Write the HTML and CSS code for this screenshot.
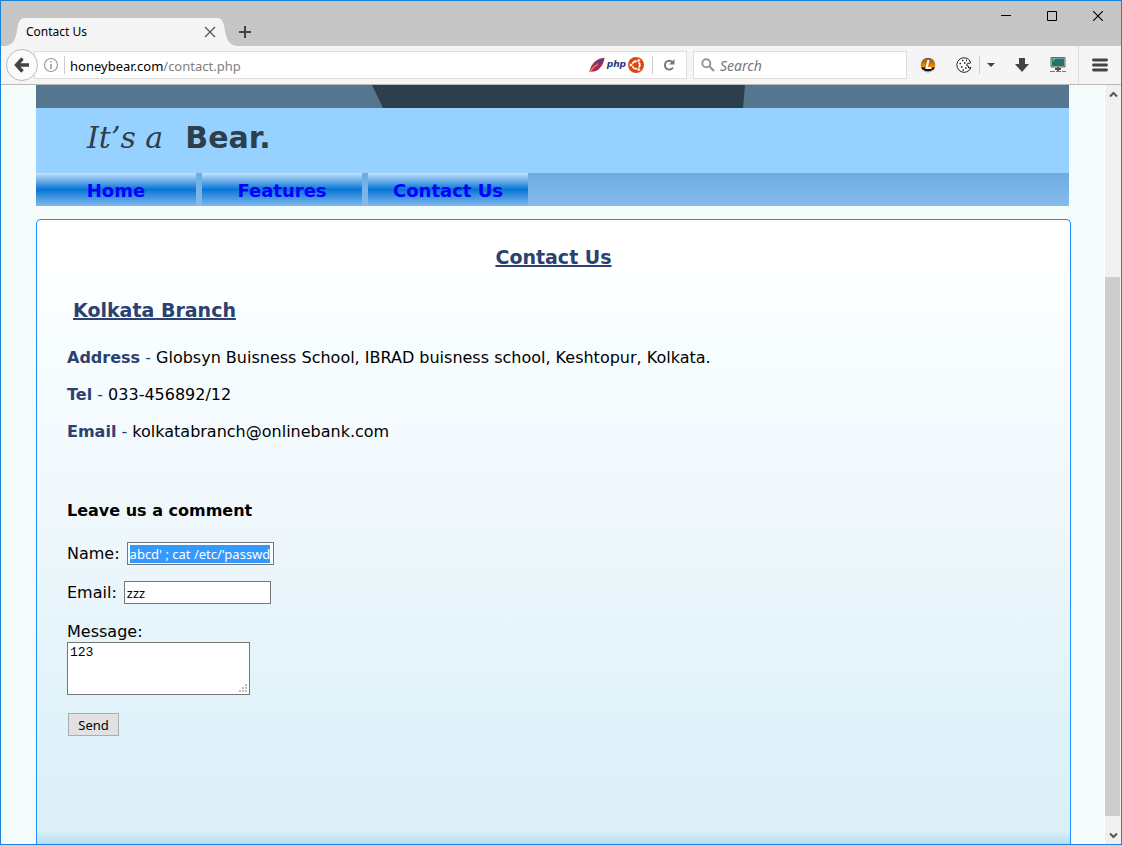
FILE: index.html
```html
<!DOCTYPE html>
<html lang="en">
<head>
<meta charset="utf-8">
<title>Contact Us</title>
<link rel="stylesheet" href="styles.css">
</head>
<body>
<div class="window">
  <header class="titlebar">
    <div class="tab">
      <svg class="tab-edge" viewBox="0 0 20 29" preserveAspectRatio="none"><path d="M0 29C8 28 10 23 12 14C13 4 15 0 20 0V29Z" fill="#f5f5f5"/></svg>
      <div class="tab-body">
        <span>Contact Us</span>
        <button class="plain" aria-label="Close tab"><svg width="12" height="12" viewBox="0 0 12 12"><path d="M1 1L11 11M11 1L1 11" stroke="#555" stroke-width="1.3"/></svg></button>
      </div>
      <svg class="tab-edge" viewBox="0 0 20 29" preserveAspectRatio="none"><path d="M20 29C12 28 10 23 8 14C7 4 5 0 0 0V29Z" fill="#f5f5f5"/></svg>
    </div>
    <button class="plain new-tab" aria-label="New tab"><svg width="12" height="12" viewBox="0 0 12 12"><path d="M6 0V12M0 6H12" stroke="#444" stroke-width="2"/></svg></button>
    <div class="window-buttons">
      <button class="plain" aria-label="Minimize"><svg width="10" height="10" viewBox="0 0 10 10"><path d="M0 4.500H10" stroke="#000"/></svg></button>
      <button class="plain" aria-label="Maximize"><svg width="10" height="10" viewBox="0 0 10 10"><path d="M.5.500H9.500V9.500H.5Z" fill="none" stroke="#000"/></svg></button>
      <button class="plain" aria-label="Close"><svg width="10" height="10" viewBox="0 0 10 10"><path d="M0 0L10 10M10 0L0 10" stroke="#000" stroke-width="1.200"/></svg></button>
    </div>
  </header>

  <div class="toolbar">
    <button class="plain back" aria-label="Back"><svg width="16" height="16" viewBox="0 0 16 16"><path d="M8.500 1.500L2.500 8L8.500 14.500M3 8H15" fill="none" stroke="#444" stroke-width="3.400"/></svg></button>
    <div class="address">
      <svg width="16" height="16" viewBox="0 0 16 16"><circle cx="8" cy="8" r="6.500" fill="none" stroke="#999" stroke-width="1.200"/><path d="M8 4V5.600M8 7V12" stroke="#999" stroke-width="1.600"/></svg>
      <span class="rule"></span>
      <div class="url" role="textbox" aria-label="Address" contenteditable="true" spellcheck="false">honeybear.com<span class="path">/contact.php</span></div>
      <svg width="16" height="16" viewBox="0 0 16 16"><path d="M.5 14.500C1 11 3 7 6 4.500C9 2 12 1 15.500 1C15 4 14 8 11 11C8 14 5 15 2.500 14.500Z" fill="#b3224f"/><path d="M6 5.500C9 2.500 12 1.500 15.500 1C14 5 10 9 5 12Z" fill="#6a3a78"/><path d="M.5 15L4 11L9 7" fill="none" stroke="#e8874a" stroke-width="1.600"/><path d="M5 8L6 11M8 6L9 9" stroke="#d85b6b"/></svg>
      <span class="php">php</span>
      <svg width="16" height="16" viewBox="0 0 16 16"><circle cx="8" cy="8" r="8" fill="#e0450f"/><circle cx="8" cy="8" r="3.800" fill="none" stroke="#fff" stroke-width="1.900"/><path d="M8 8H2M8 8L11 2.800M8 8L11 13.200" stroke="#e0450f" stroke-width="1.200"/><g fill="#fff" stroke="#e0450f" stroke-width=".7"><circle cx="2.800" cy="8" r="1.700"/><circle cx="10.700" cy="3.500" r="1.700"/><circle cx="10.700" cy="12.500" r="1.700"/></g><circle cx="8" cy="8" r="2" fill="#e0450f"/></svg>
      <span class="rule reload-rule"></span>
      <button class="plain" aria-label="Reload"><svg width="14" height="14" viewBox="0 0 14 14"><path d="M10.500 4.200A4.400 4.400 0 1 0 11 9.500" fill="none" stroke="#777" stroke-width="1.900"/><path d="M12.500 1V6.500H7Z" fill="#777"/></svg></button>
    </div>
    <label class="search">
      <svg width="14" height="14" viewBox="0 0 14 14"><circle cx="5.300" cy="5.300" r="4" fill="none" stroke="#999" stroke-width="2"/><path d="M8.500 8.500L13 13" stroke="#999" stroke-width="2.400"/></svg>
      <input type="text" placeholder="Search" aria-label="Search">
    </label>
    <div class="tools">
      <button class="plain" aria-label="Lazarus"><svg width="16" height="16" viewBox="0 0 16 16"><defs><linearGradient id="orb" x2="0" y2="1"><stop offset="0" stop-color="#67635e"/><stop offset=".25" stop-color="#b56411"/><stop offset=".6" stop-color="#f28b0a"/><stop offset=".72" stop-color="#221408"/><stop offset="1" stop-color="#111"/></linearGradient></defs><circle cx="8" cy="8" r="7.300" fill="url(#orb)"/><path d="M8.500 3L6.500 11H11.500" fill="none" stroke="#fff" stroke-width="2"/><path d="M3 13Q8 17 13 13" fill="none" stroke="#ddd" stroke-width="1"/></svg></button>
      <button class="plain cookie" aria-label="Cookies"><svg width="16" height="16" viewBox="0 0 16 16"><path d="M12.500 2.200A7.300 7.300 0 1 0 15 10.500L12.500 11L12.300 9L10.500 8.500L11.500 6.500L14.500 6L14 4Z" fill="#fff" stroke="#222"/><path d="M6 3.500H7.500M3.500 6.500H5M8 6H9.500M5 10H6.500M9 11H10.500M6.500 13H8M10 3.500H11" stroke="#222" stroke-width="1.300"/></svg></button>
      <span class="rule"></span>
      <button class="plain caret" aria-label="More"><svg width="8" height="4" viewBox="0 0 8 4"><path d="M0 0H8L4 4Z" fill="#444"/></svg></button>
      <button class="plain down" aria-label="Downloads"><svg width="14" height="14" viewBox="0 0 14 14"><path d="M4 0H10V6H14L7 14L0 6H4Z" fill="#444"/></svg></button>
      <button class="plain" aria-label="Network"><svg width="16" height="16" viewBox="0 0 16 16"><path d="M1 .5H15V10H1Z" fill="#ccc" stroke="#666"/><path d="M2 1.500H14V9H2Z" fill="#217568"/><path d="M2.500 4L5 1.800" stroke="#a8e5d4"/><path d="M8 10V14M5 12H11" stroke="#555" stroke-width="2"/><path d="M0 14.500H16" stroke="#777" stroke-dasharray="5 1"/></svg></button>
      <span class="menu-rule"></span>
      <button class="plain menu" aria-label="Menu"><svg width="16" height="14" viewBox="0 0 16 14"><path d="M1.500 2H14.500M1.500 7H14.500M1.500 12H14.500" stroke="#444" stroke-width="2.800" stroke-linecap="round"/></svg></button>
    </div>
  </div>

  <div class="viewport">
    <div class="page">
      <div class="banner">
        <svg class="photo" viewBox="0 0 1033 23" preserveAspectRatio="none"><path d="M0 0H1033V23H0Z" fill="#55768f"/><path d="M336 0H709L707 23H347Z" fill="#2d3e4c"/></svg>
        <div class="slogan"><em>It’s a</em><b>Bear.</b></div>
      </div>
      <nav class="nav"><a href="#">Home</a><a href="#">Features</a><a href="#">Contact Us</a></nav>
      <main class="panel">
        <h1>Contact Us</h1>
        <h2>Kolkata Branch</h2>
        <p><b>Address</b> <span class="dash">-</span> Globsyn Buisness School, IBRAD buisness school, Keshtopur, Kolkata.</p>
        <p><b>Tel</b> <span class="dash">-</span> 033-456892/12</p>
        <p><b>Email</b> <span class="dash">-</span> kolkatabranch@onlinebank.com</p>
        <form>
          <h3>Leave us a comment</h3>
          <div class="field"><label for="name">Name:</label><input id="name" type="text" value="abcd' ; cat /etc/'passwd"></div>
          <div class="field"><label for="email">Email:</label><input id="email" type="text" value="zzz"></div>
          <div class="message"><label for="message">Message:</label><textarea id="message">123</textarea></div>
          <button class="send" type="button">Send</button>
        </form>
      </main>
    </div>
    <div class="scrollbar">
      <svg width="9" height="7" viewBox="0 0 9 7"><path d="M1 5.500L4.500 2L8 5.500" fill="none" stroke="#555" stroke-width="2"/></svg>
      <div class="track"><div class="thumb"></div></div>
      <svg width="9" height="7" viewBox="0 0 9 7"><path d="M1 1.500L4.500 5L8 1.500" fill="none" stroke="#555" stroke-width="2"/></svg>
    </div>
  </div>
</div>
<script src="script.js"></script>
</body>
</html>
```
FILE: styles.css
```css
* { box-sizing: border-box; }
body { margin: 0; }
.window {
  display: flex; flex-direction: column;
  height: 100vh; overflow: hidden;
  border: 1px solid #1883d7; background: #f4fbfb;
  font: 12px/16px "Noto Sans", sans-serif;
}
svg { display: block; flex: none; }
.plain { display: flex; align-items: center; justify-content: center; padding: 0; border: 0; background: none; }

.titlebar { display: flex; align-items: flex-end; height: 45px; flex: none; background: #c6c6c6; }
.tab { display: flex; height: 28px; margin-left: 4px; }
.tab-edge { width: 20px; height: 28px; }
.tab-body { display: flex; align-items: center; justify-content: space-between; width: 192px; padding-left: 1px; background: #f5f5f5; }
.tab-body span { color: #000; }
.tab-body .plain { margin-right: 1px; }
.new-tab { width: 20px; height: 28px; margin-left: -2px; }
.window-buttons { display: flex; align-self: flex-start; margin-left: auto; }
.window-buttons .plain { width: 46px; height: 30px; }

.toolbar { display: flex; align-items: center; height: 39px; flex: none; padding-left: 5px; background: #f5f5f5; border-bottom: 1px solid #b9b9b9; }
.back { width: 32px; height: 32px; border: 1px solid #bbb; border-radius: 50%; background: #fbfbfb; z-index: 1; flex: none; }
.address { display: flex; align-items: center; flex: 1; height: 28px; margin-left: -4px; padding-left: 8px; border: 1px solid #ddd; background: #fff; }
.rule { width: 1px; height: 18px; background: #ccc; flex: none; }
.address > .rule { margin: 0 5px; }
.url { flex: 1; padding-top: 1px; font-size: 13px; line-height: 20px; color: #000; outline: 0; }
.path { color: #808080; }
.php { margin: 0 2px 2px; font: italic bold 9px/14px "DejaVu Sans", sans-serif; color: #26357d; }
.address > .reload-rule { margin: 0 9px 0 8px; }
.address .plain { margin-right: 10px; }
.search { display: flex; align-items: center; width: 214px; height: 28px; margin-left: 6px; padding-left: 7px; gap: 5px; border: 1px solid #ddd; background: #fff; }
.search input { min-width: 0; flex: 1; padding: 1px 0 0; border: 0; background: none; font: italic 14px/20px "Noto Sans", sans-serif; outline: 0; }
.search input::placeholder { color: #777; }
.tools { display: flex; align-items: center; align-self: stretch; padding-left: 13px; }
.cookie { margin: 0 7px 0 20px; }
.caret { margin: 0 20px 0 7px; }
.down { margin-right: 21px; }
.menu-rule { width: 1px; align-self: stretch; margin: 0 13px 0 12px; background: #ddd; }
.menu { margin-right: 13px; }

.viewport { display: flex; flex: 1; min-height: 0; }
.page { flex: 1; min-width: 0; overflow: hidden; padding: 0 33px 0 35px; font: 16px/21px "DejaVu Sans", Verdana, sans-serif; display: flex; flex-direction: column; }
.banner { margin-right: 2px; background: #97d1ff; }
.photo { width: 100%; height: 23px; }
.slogan { display: flex; gap: 22px; height: 65px; padding: 14px 0 0 51px; font-size: 30px; line-height: 32px; color: #2d3e4c; }
.slogan em { font-family: "DejaVu Serif", serif; }
.nav { display: flex; gap: 6px; flex: none; height: 33px; margin-right: 2px; background: linear-gradient(#6dace3, #86bbeb); }
.nav a { width: 160px; padding-top: 1px; text-align: center; font-weight: bold; font-size: 18px; line-height: 34px; height: 33px; color: #00f; text-decoration: none; background: linear-gradient(#c6e1f9, #0876d8 50%, #80b9eb); }
.panel { flex: 1; margin-top: 13px; padding: 25px 30px; border: 1px solid #1e90ff; border-bottom: 0; border-radius: 5px 5px 0 0; color: #000; background: linear-gradient(transparent calc(100% - 13px), #b4dff2), linear-gradient(#fff 5%, #f8fdff 20%, #f0f8fc 46%, #dff2f9 82%, #dbeff6); }
h1, h2 { margin: 0; color: #2b4170; font-size: 19px; line-height: 24px; text-decoration: underline; text-decoration-thickness: 2px; }
h1 { text-align: center; }
h2 { margin: 29px 0 25px 6px; }
p { margin: 0 0 16px; }
p b, .dash { color: #2b4170; }
form { padding-top: 42px; }
h3 { margin: 0 0 21px; font-size: 16px; line-height: 21px; }
.field { display: flex; align-items: center; gap: 7px; margin-bottom: 16px; }
.field input { width: 147px; height: 23px; padding: 1px 2px; border: 1px solid #777; background: #fff; font: 13px/18px "Noto Sans", sans-serif; outline: 0; }
.field input::selection { color: #fff; background: #39f; }
.message { display: flex; flex-direction: column; align-items: flex-start; padding-top: 1px; }
textarea { width: 183px; height: 53px; padding: 2px; border: 1px solid #777; font: 13px/16px "Liberation Mono", monospace; }
textarea::-webkit-resizer { background: url("data:image/svg+xml,%3Csvg xmlns='http://www.w3.org/2000/svg' width='12' height='12'%3E%3Cpath d='M8 2h2v2H8zM5 5h2v2H5zM8 5h2v2H8zM2 8h2v2H2zM5 8h2v2H5zM8 8h2v2H8z' fill='%23bbb'/%3E%3C/svg%3E") no-repeat right bottom; }
.send { display: block; width: 51px; height: 23px; margin: 18px 0 0 1px; padding: 1px 0 0; border: 1px solid #adadad; background: #e1e1e1; font: 13px/18px "Noto Sans", sans-serif; color: #000; }

.scrollbar { display: flex; flex-direction: column; align-items: center; width: 17px; flex: none; padding: 6px 0 5px; border-left: 1px solid #fff; background: #f0f0f0; }
.track { display: flex; flex: 1; align-self: stretch; margin: 4px 0 16px; padding-top: 175px; padding-right: 1px; }
.thumb { flex: 1; background: #cdcdcd; }
```
FILE: script.js
```js
const nameField = document.getElementById("name");
nameField.focus();
nameField.select();
```
